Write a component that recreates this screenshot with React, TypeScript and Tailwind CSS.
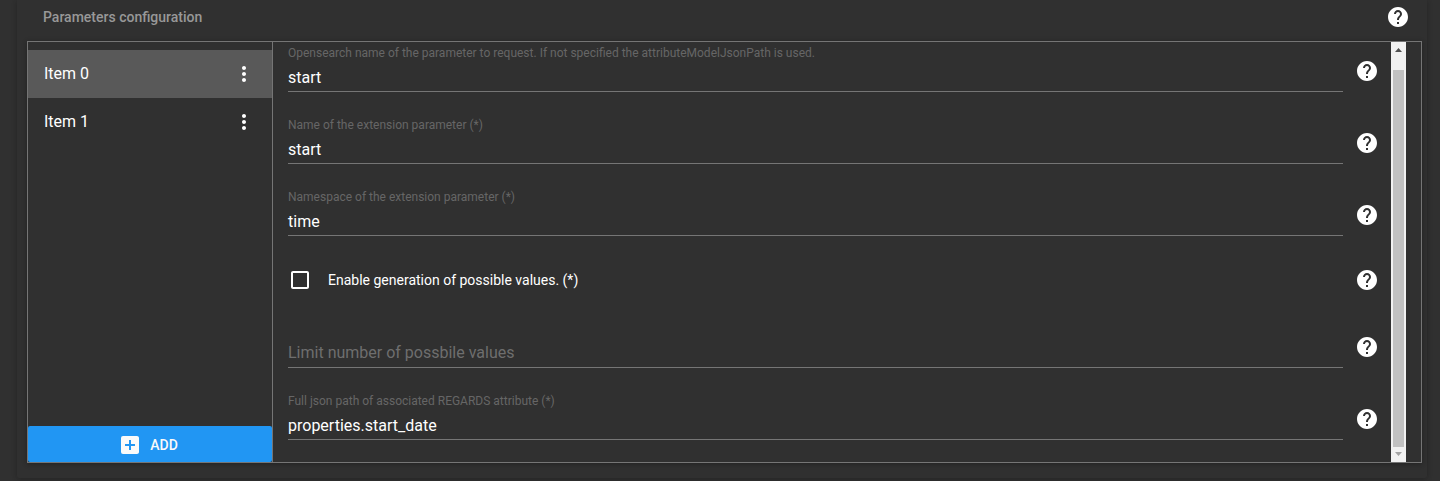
import type { ReactNode } from "react";
import { MdAddBox, MdCheckBoxOutlineBlank, MdHelp, MdMoreVert } from "react-icons/md";

function Row({ children, className, helpClass }: { children: ReactNode; className: string; helpClass: string }) {
  return (
    <div className={`flex w-full shrink-0 items-end ${className}`}>
      <div className="min-w-0 flex-1">{children}</div>
      <MdHelp size={24} className={`ml-3 mr-3 shrink-0 ${helpClass}`} />
    </div>
  );
}

function Field({ label, value, className = "h-[72px]" }: { label: string; value?: string; className?: string }) {
  return (
    <Row className={className} helpClass="mb-[17px]">
      <div className="mb-2 flex flex-col justify-end border-b border-[#757575]">
        {value ? (
          <>
            <span className="mb-[5px] text-xs leading-4 text-[#666666]">{label}</span>
            <span className="mb-px text-base leading-6">{value}</span>
          </>
        ) : (
          <span className="mb-0.5 text-base leading-6 text-[#6e6e6e]">{label}</span>
        )}
      </div>
    </Row>
  );
}

function Item({ name, selected }: { name: string; selected?: boolean }) {
  return (
    <li className={`flex h-12 items-center justify-between pl-4 pr-4 ${selected ? "bg-[#595959]" : ""}`}>
      <span className="text-base leading-6">{name}</span>
      <MdMoreVert size={24} />
    </li>
  );
}

function Scrollbar() {
  return (
    <div className="flex w-[15px] shrink-0 flex-col items-center bg-[#f1f1f1]">
      <svg width="15" height="28" viewBox="0 0 15 28" className="shrink-0">
        <path d="M4 10 7.5 6 11 10Z" fill="#505050" />
      </svg>
      <div className="w-[11px] flex-1 bg-[#c1c1c1]" />
      <svg width="15" height="15" viewBox="0 0 15 15" className="shrink-0">
        <path d="M4 5H11L7.5 9Z" fill="#a3a3a3" />
      </svg>
    </div>
  );
}

export default function App() {
  return (
    <div className="h-[481px] overflow-hidden bg-[#303030] pl-[17px] pr-[13px] font-['Roboto',sans-serif] text-white">
      <section className="h-[478px] rounded-b-[2px] bg-[#303030] pl-2.5 pr-[5px] shadow-[0_1px_6px_rgba(0,0,0,0.12),0_1px_4px_rgba(0,0,0,0.12)]">
        <header className="flex h-[41px] items-start justify-between pl-4 pr-3 pt-[5px]">
          <h2 className="text-sm font-medium leading-6 text-[#989898]">Parameters configuration</h2>
          <MdHelp size={24} />
        </header>
        <div className="flex h-[422px] border border-[#757575] shadow-[0_1px_6px_rgba(0,0,0,0.16),0_1px_4px_rgba(0,0,0,0.16)]">
          <aside className="flex w-[245px] shrink-0 flex-col justify-between border-r border-[#757575] pt-2">
            <ul>
              <Item name="Item 0" selected />
              <Item name="Item 1" />
            </ul>
            <button className="flex h-9 w-full items-center justify-center rounded-[2px] bg-[#2196f3] pr-1 pt-0.5 text-sm font-medium text-[#fafafa]">
              <MdAddBox size={24} />
              <span className="ml-2">ADD</span>
            </button>
          </aside>
          <main className="flex min-w-0 flex-1 flex-col overflow-hidden pl-[15px]">
            <Field
              className="h-[58px]"
              label="Opensearch name of the parameter to request. If not specified the attributeModelJsonPath is used."
              value="start"
            />
            <Field label="Name of the extension parameter (*)" value="start" />
            <Field label="Namespace of the extension parameter (*)" value="time" />
            <Row className="h-[60px]" helpClass="mb-3">
              <label className="mb-3 flex items-center">
                <MdCheckBoxOutlineBlank size={24} />
                <span className="ml-4 text-sm leading-6">Enable generation of possible values. (*)</span>
              </label>
            </Row>
            <Field label="Limit number of possbile values" />
            <Field label="Full json path of associated REGARDS attribute (*)" value="properties.start_date" />
          </main>
          <Scrollbar />
          <div className="w-[15px] shrink-0" />
        </div>
      </section>
    </div>
  );
}
